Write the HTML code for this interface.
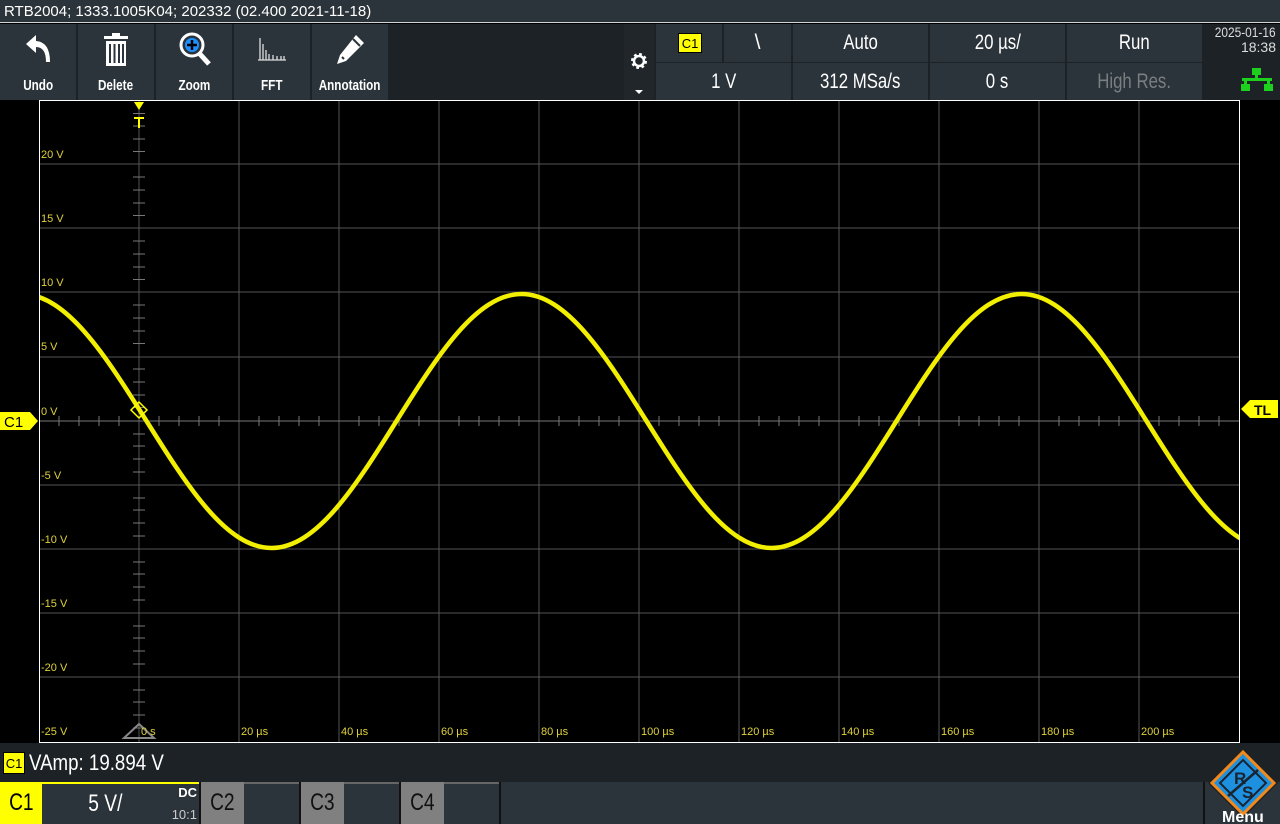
<!DOCTYPE html>
<html><head><meta charset="utf-8"><style>
*{margin:0;padding:0;box-sizing:border-box}
body{width:1280px;height:824px;background:#000;position:relative;overflow:hidden;font-family:"Liberation Sans Narrow","Liberation Sans",sans-serif;color:#fff}
.a{position:absolute}
.n{display:inline-block;transform:scaleX(.8);transform-origin:center}
.title{left:0;top:0;width:1280px;height:23px;background:#2b343a;font-family:"Liberation Sans",sans-serif;font-size:15px;line-height:23px;padding-left:4px;border-bottom:1px solid #cfd4d6}
.tb{top:24px;height:76px;background:#1d2226}
.btn{top:24px;width:76px;height:76px;background:#2b343a;text-align:center;font-size:15px;font-weight:bold}
.btn span{position:absolute;left:-10px;right:-10px;top:53px}
.btn span i{font-style:normal;display:inline-block;transform:scaleX(.78)}
.btn svg{position:absolute;left:22px;top:8px}
.cell{background:#2b343a;text-align:center;font-size:21px;line-height:37px}
.ch{top:782px;height:42px;font-size:24px;line-height:42px}
</style></head><body>
<div class="a title">RTB2004; 1333.1005K04; 202332 (02.400 2021-11-18)</div>
<div class="a tb" style="left:0;width:1280px"></div>
<div class="a btn" style="left:0"><svg width="32" height="36" viewBox="0 0 32 36"><path d="M4 12 L14 3 L14 9 Q28 10 28 30 L24 30 Q24 15 14 15 L14 21 Z" fill="#fff"/></svg><span><i>Undo</i></span></div>
<div class="a btn" style="left:78px"><svg width="32" height="36" viewBox="0 0 32 36"><rect x="4" y="4" width="24" height="3" fill="#fff"/><rect x="12" y="1" width="8" height="3" fill="#fff"/><rect x="6" y="9" width="20" height="25" fill="#fff"/><rect x="9" y="12" width="2" height="19" fill="#2b343a"/><rect x="13.5" y="12" width="2" height="19" fill="#2b343a"/><rect x="18" y="12" width="2" height="19" fill="#2b343a"/><rect x="22" y="12" width="2" height="19" fill="#2b343a"/></svg><span><i>Delete</i></span></div>
<div class="a btn" style="left:156px"><svg width="36" height="36" viewBox="0 0 36 36"><circle cx="14" cy="13" r="11" fill="none" stroke="#fff" stroke-width="3"/><path d="M21 21 L31 32" stroke="#fff" stroke-width="5"/><circle cx="14" cy="13" r="7" fill="#1e90ff"/><path d="M14 8v10M9 13h10" stroke="#000" stroke-width="2.5"/></svg><span><i>Zoom</i></span></div>
<div class="a btn" style="left:234px"><svg width="32" height="36" viewBox="0 0 32 36"><path d="M2 28h28M4 28V6M7 28V12M10 28V18M13 28V22M17 28V23M21 28V24M25 28V24M28 28V24" stroke="#ddd" stroke-width="1.3"/></svg><span><i>FFT</i></span></div>
<div class="a btn" style="left:312px"><svg width="34" height="36" viewBox="0 0 34 36"><path d="M22 3 L30 11 L12 29 L3 32 L6 23 Z" fill="#fff"/><path d="M19 7 L26 14" stroke="#2b343a" stroke-width="2"/><path d="M8 25 L10 27" stroke="#2b343a" stroke-width="2"/></svg><span><i>Annotation</i></span></div>
<div class="a" style="left:624px;top:24px;width:30px;height:76px;background:#20262a"><svg class="a" style="left:6px;top:28px" width="18" height="18" viewBox="0 0 18 18"><circle cx="9" cy="9" r="6" fill="none" stroke="#fff" stroke-width="4" stroke-dasharray="2.4 2.3"/><circle cx="9" cy="9" r="5" fill="none" stroke="#fff" stroke-width="2.5"/></svg><div class="a" style="left:11px;top:66px;width:0;height:0;border-left:4px solid transparent;border-right:4px solid transparent;border-top:4px solid #fff"></div></div>
<div class="a cell" style="left:656px;top:24px;width:66px;height:38px"><div class="a" style="left:22px;top:9px;width:24px;height:20px;background:#ff0;color:#000;font-size:13px;line-height:20px;border:1px solid #000">C1</div></div>
<div class="a cell" style="left:724px;top:24px;width:67px;height:38px">\</div>
<div class="a cell" style="left:793px;top:24px;width:135px;height:38px"><span class="n">Auto</span></div>
<div class="a cell" style="left:930px;top:24px;width:135px;height:38px"><span class="n">20 µs/</span></div>
<div class="a cell" style="left:1067px;top:24px;width:135px;height:38px"><span class="n">Run</span></div>
<div class="a cell" style="left:656px;top:63px;width:135px;height:37px"><span class="n">1 V</span></div>
<div class="a cell" style="left:793px;top:63px;width:135px;height:37px"><span class="n">312 MSa/s</span></div>
<div class="a cell" style="left:930px;top:63px;width:135px;height:37px"><span class="n">0 s</span></div>
<div class="a cell" style="left:1067px;top:63px;width:135px;height:37px;color:#7a7f82"><span class="n">High Res.</span></div>
<div class="a" style="left:1204px;top:25px;width:72px;text-align:right;font-size:14px;line-height:15px;color:#ddd"><span style="display:inline-block;transform:scaleX(.85);transform-origin:right">2025-01-16</span><br>18:38</div>
<svg class="a" style="left:1240px;top:68px" width="34" height="24" viewBox="0 0 34 24"><rect x="12" y="0" width="9" height="7" fill="#1ed01e"/><rect x="15" y="7" width="3" height="4" fill="#1ed01e"/><rect x="2" y="10" width="30" height="3" fill="#1ed01e"/><rect x="4" y="13" width="3" height="3" fill="#1ed01e"/><rect x="27" y="13" width="3" height="3" fill="#1ed01e"/><rect x="1" y="16" width="9" height="7" fill="#1ed01e"/><rect x="24" y="16" width="9" height="7" fill="#1ed01e"/></svg>
<svg class="a" style="left:0;top:100px" width="1280" height="643" viewBox="0 100 1280 643">
<g stroke="#555" stroke-width="1">
<path d="M139 101V742M239 101V742M339 101V742M439 101V742M539 101V742M639 101V742M739 101V742M839 101V742M939 101V742M1039 101V742M1139 101V742"/>
<path d="M40 164H1239M40 228H1239M40 292H1239M40 357H1239M40 485H1239M40 549H1239M40 613H1239M40 677H1239"/>
<path d="M40 421H1239" stroke="#777"/>
</g>
<path d="M133 113.5h12M133 126h12M133 139h12M133 151.5h12M133 177h12M133 190h12M133 203h12M133 215.5h12M133 241h12M133 254h12M133 267h12M133 279.5h12M133 305h12M133 318h12M133 331h12M133 343.5h12M133 369h12M133 382h12M133 395h12M133 407.5h12M133 434h12M133 446h12M133 459h12M133 472h12M133 498h12M133 510h12M133 523h12M133 536h12M133 562h12M133 574h12M133 587h12M133 600h12M133 626h12M133 638h12M133 651h12M133 664h12M133 690h12M133 702h12M133 715h12M133 728h12" stroke="#777"/>
<path d="M59 416v10M79 416v10M99 416v10M119 416v10M159 416v10M179 416v10M199 416v10M219 416v10M259 416v10M279 416v10M299 416v10M319 416v10M359 416v10M379 416v10M399 416v10M419 416v10M459 416v10M479 416v10M499 416v10M519 416v10M559 416v10M579 416v10M599 416v10M619 416v10M659 416v10M679 416v10M699 416v10M719 416v10M759 416v10M779 416v10M799 416v10M819 416v10M859 416v10M879 416v10M899 416v10M919 416v10M959 416v10M979 416v10M999 416v10M1019 416v10M1059 416v10M1079 416v10M1099 416v10M1119 416v10M1159 416v10M1179 416v10M1199 416v10M1219 416v10" stroke="#777"/>
<rect x="39.5" y="100.5" width="1200" height="642" fill="none" stroke="#fff" stroke-width="1"/>
<defs><clipPath id="c"><rect x="40" y="101" width="1199" height="641"/></clipPath></defs>
<path clip-path="url(#c)" fill="none" stroke="#f2f000" stroke-width="4.5" d="M21.5 294 C66.74 294 105.73 355.94 146.5 421 C187.27 486.06 226.26 548 271.5 548 C316.74 548 355.73 486.06 396.5 421 C437.27 355.94 476.26 294 521.5 294 C566.74 294 605.73 355.94 646.5 421 C687.27 486.06 726.26 548 771.5 548 C816.74 548 855.73 486.06 896.5 421 C937.27 355.94 976.26 294 1021.5 294 C1066.74 294 1105.73 355.94 1146.5 421 C1187.27 486.06 1226.26 548 1271.5 548"/>
<path d="M139 402 L147 410 L139 418 L131 410 Z" fill="none" stroke="#ff0" stroke-width="1.5"/>
<path d="M134 102h10l-5 8z" fill="#ff0"/><path d="M134 117h10v2h-4v9h-2v-9h-4z" fill="#ff0"/>
<path d="M124 738 L139 724 L154 738 Z" fill="none" stroke="#888" stroke-width="2"/>
<g fill="#e0d23a" font-family="Liberation Sans Narrow, Liberation Sans, sans-serif" font-size="11">
<text x="41" y="158">20 V</text><text x="41" y="222">15 V</text><text x="41" y="286">10 V</text><text x="41" y="350">5 V</text><text x="41" y="415">0 V</text><text x="41" y="479">-5 V</text><text x="41" y="543">-10 V</text><text x="41" y="607">-15 V</text><text x="41" y="671">-20 V</text><text x="41" y="735">-25 V</text>
<text x="141" y="735">0 s</text><text x="241" y="735">20 µs</text><text x="341" y="735">40 µs</text><text x="441" y="735">60 µs</text><text x="541" y="735">80 µs</text><text x="641" y="735">100 µs</text><text x="741" y="735">120 µs</text><text x="841" y="735">140 µs</text><text x="941" y="735">160 µs</text><text x="1041" y="735">180 µs</text><text x="1141" y="735">200 µs</text>
</g>
<path d="M0 412H30L38 421L30 430H0Z" fill="#ff0"/><text x="4" y="427" font-size="15" fill="#000" font-family="Liberation Sans Narrow, Liberation Sans, sans-serif">C1</text>
<path d="M1278 400H1250L1241 409L1250 418H1278Z" fill="#ff0"/><text x="1254" y="415" font-size="14" font-weight="bold" fill="#000" font-family="Liberation Sans, sans-serif">TL</text>
</svg>
<div class="a" style="left:0;top:743px;width:1280px;height:39px;background:#1d2226"></div>
<div class="a" style="left:3px;top:752px;width:22px;height:22px;background:#ff0;color:#000;font-size:13px;line-height:22px;text-align:center;border:1px solid #000">C1</div>
<div class="a" style="left:29px;top:748px;font-size:22px;line-height:30px;transform:scaleX(.85);transform-origin:left">VAmp: 19.894 V</div>
<div class="a" style="left:0;top:782px;width:1280px;height:42px;background:#2b343a"></div>
<div class="a ch" style="left:0;width:42px;background:#ff0;color:#000;text-align:center"><span class="n">C1</span></div>
<div class="a ch" style="left:42px;width:157px;background:#2b343a;border-top:2px solid #ff0"><div class="a" style="left:42px;top:0;font-size:24px;line-height:40px"><span class="n">5 V/</span></div><div class="a" style="right:2px;top:2px;font-size:13px;line-height:14px;text-align:right;font-weight:bold">DC</div><div class="a" style="right:2px;top:24px;font-size:13px;line-height:14px;color:#ccc">10:1</div></div>
<div class="a" style="left:199px;top:782px;width:2px;height:42px;background:#111"></div>
<div class="a ch" style="left:201px;width:43px;background:#808080;color:#111;text-align:center"><span class="n">C2</span></div>
<div class="a ch" style="left:244px;width:55px;border-top:2px solid #666"></div>
<div class="a ch" style="left:301px;width:43px;background:#808080;color:#111;text-align:center"><span class="n">C3</span></div>
<div class="a ch" style="left:344px;width:55px;border-top:2px solid #666"></div>
<div class="a ch" style="left:401px;width:43px;background:#808080;color:#111;text-align:center"><span class="n">C4</span></div>
<div class="a ch" style="left:444px;width:55px;border-top:2px solid #666"></div>
<div class="a" style="left:299px;top:782px;width:2px;height:42px;background:#111"></div>
<div class="a" style="left:399px;top:782px;width:2px;height:42px;background:#111"></div>
<div class="a" style="left:499px;top:782px;width:2px;height:42px;background:#111"></div>
<div class="a" style="left:1203px;top:782px;width:2px;height:42px;background:#111"></div>
<svg class="a" style="left:1206px;top:746px" width="74" height="78" viewBox="0 0 74 78">
<path d="M37 2 L72 37 L37 72 L2 37 Z" fill="#222"/>
<path d="M37 6 L68 37 L37 68 L6 37 Z" fill="#1e90e0" stroke="#f08a1c" stroke-width="3"/>
<path d="M37 14 L60 37 L37 60 L14 37 Z" fill="none" stroke="#1a2430" stroke-width="2"/>
<path d="M22 50 Q37 37 52 24" stroke="#1a2430" stroke-width="2.5" fill="none"/>
<text x="28" y="38" font-size="17" font-weight="bold" fill="#1a2430" font-family="Liberation Sans,sans-serif">R</text>
<text x="36" y="52" font-size="17" font-weight="bold" fill="#1a2430" font-family="Liberation Sans,sans-serif">S</text>
<text x="16" y="76" font-size="16" font-weight="bold" fill="#fff" font-family="Liberation Sans,sans-serif">Menu</text>
</svg>
</body></html>
